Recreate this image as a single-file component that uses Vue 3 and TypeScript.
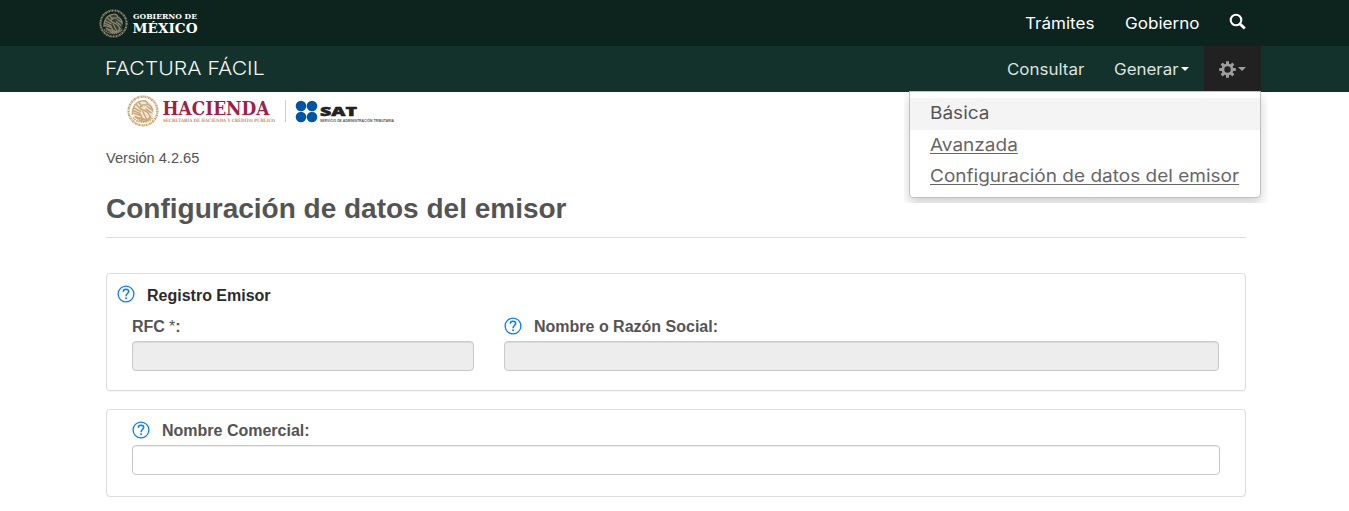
<script setup lang="ts">
interface MenuItem {
  label: string
  active: boolean
}

const menu: MenuItem[] = [
  { label: 'Básica', active: true },
  { label: 'Avanzada', active: false },
  { label: 'Configuración de datos del emisor', active: false },
]
</script>

<template>
  <svg class="defs" width="0" height="0" aria-hidden="true">
    <symbol id="seal" viewBox="0 0 60 60">
      <g fill="none" stroke="currentColor">
        <circle cx="30" cy="30" r="27" stroke-width="4.4" stroke-dasharray="3.2 1.1 1.6 .9" />
        <circle cx="30" cy="30" r="20" fill="currentColor" stroke="none" opacity=".3" />
        <path stroke-width="2.6" d="M10 37C10 22 17 12 29 11c8-1 11 4 8 7-3 2-7-1-10 2-4 4-1 7 3 8 6 2 12 6 13 14M13 24l13 7M11 29l14 6M12 34l13 4M17 18l11 10M22 14l7 8M29 30l8 16M24 34l6 13M35 26l11 8M37 21l10 7M39 17c6 3 9 8 9 14M16 41c7 4 13 1 17 5 4 3 8 1 11-3M22 46c5 4 12 4 17 1" />
        <path stroke-width="3" stroke-dasharray="3 1.3" d="M11 42c7 11 30 13 38-1M15 40c8 9 23 9 31-1" />
      </g>
    </symbol>
    <symbol id="help" viewBox="0 0 18 18">
      <g fill="none" stroke="#0d7bf2">
        <circle cx="9" cy="9" r="7.900" stroke-width="1.300" />
        <path d="M6.300 6.700C6.300 5.100 7.400 4.200 9 4.200s2.700.9 2.700 2.400c0 1.900-2.600 2-2.600 4.200v.5" stroke-width="1.500" />
      </g>
      <circle cx="9.100" cy="13.300" r=".95" fill="#0d7bf2" />
    </symbol>
  </svg>

  <header>
    <div class="gov-bar">
      <div class="container">
        <svg class="gov-logo" width="104" height="46" viewBox="0 0 104 46">
          <use class="gov-seal" href="#seal" x="0" y="9" width="29" height="29" />
          <text class="gov-small" x="34" y="19.400" textLength="64" lengthAdjust="spacingAndGlyphs">GOBIERNO DE</text>
          <text class="gov-large" x="33.500" y="33.300" textLength="65" lengthAdjust="spacingAndGlyphs">MÉXICO</text>
        </svg>
        <nav class="gov-nav">
          <a class="wide tramites">Trámites</a>
          <a class="wide gobierno">Gobierno</a>
          <svg class="search" width="18" height="18" viewBox="0 0 18 18">
            <circle cx="7" cy="7" r="5.300" fill="none" stroke="#fff" stroke-width="2.100" />
            <path d="M10.800 10.800l5 4.800" stroke="#fff" stroke-width="2.800" stroke-linecap="butt" />
          </svg>
        </nav>
      </div>
    </div>

    <div class="app-bar">
      <div class="container">
        <span class="wide brand">FACTURA FÁCIL</span>
        <nav class="app-nav">
          <a class="wide consultar">Consultar</a>
          <a class="wide generar">Generar</a>
          <i class="caret"></i>
          <div class="settings">
            <svg width="17" height="17" viewBox="-8.500 -8.500 17 17">
              <g fill="#9d9d9d">
                <rect v-for="n in 4" :key="n" x="-1.500" y="-8.300" width="3" height="16.600" rx=".4" :transform="`rotate(${n * 45})`" />
                <circle r="5.900" />
              </g>
              <circle r="3.200" fill="#212121" />
            </svg>
            <i class="caret muted"></i>
            <div class="menu-clip">
              <ul class="menu">
                <li v-for="item in menu" :key="item.label" :class="{ active: item.active }"><a class="wide">{{ item.label }}</a></li>
              </ul>
            </div>
          </div>
        </nav>
      </div>
    </div>
  </header>

  <main>
    <svg class="logos" width="275" height="46" viewBox="0 0 275 46">
      <use class="shcp-seal" href="#seal" x="0" y="3" width="32" height="32" />
      <text class="hacienda" x="35.500" y="22.600" textLength="107" lengthAdjust="spacingAndGlyphs">HACIENDA</text>
      <text class="secretaria" x="36" y="30.300" textLength="112" lengthAdjust="spacingAndGlyphs">SECRETARÍA DE HACIENDA Y CRÉDITO PÚBLICO</text>
      <path d="M158.500 8v22" stroke="#d9c9ae" />
      <g fill="#0055a5">
        <circle cx="174" cy="14" r="5.300" />
        <circle cx="185" cy="14" r="5.300" />
        <circle cx="174" cy="25" r="5.300" />
        <circle cx="185" cy="25" r="5.300" />
      </g>
      <text class="sat" x="193" y="24.300" textLength="37" lengthAdjust="spacingAndGlyphs">SAT</text>
      <text class="servicio" x="193" y="30.300" textLength="74" lengthAdjust="spacingAndGlyphs">SERVICIO DE ADMINISTRACIÓN TRIBUTARIA</text>
    </svg>
    <p class="version">Versión 4.2.65</p>
    <h1>Configuración de datos del emisor</h1>

    <section class="panel issuer">
      <div class="legend">
        <svg class="help"><use href="#help" /></svg>
        <strong>Registro Emisor</strong>
      </div>
      <div class="fields">
        <div class="field">
          <label>RFC <span class="star">*</span>:</label>
          <input disabled />
        </div>
        <div class="field">
          <label><svg class="help"><use href="#help" /></svg>Nombre o Razón Social:</label>
          <input disabled />
        </div>
      </div>
    </section>

    <section class="panel trade">
      <div class="field">
        <label><svg class="help"><use href="#help" /></svg>Nombre Comercial:</label>
        <input />
      </div>
    </section>
  </main>
</template>

<style>
html,
body {
  margin: 0;
  background: #fff;
  overflow: hidden;
}
</style>

<style scoped>
* {
  box-sizing: border-box;
}
.defs {
  position: absolute;
}
header {
  font-family: Inter, sans-serif;
}
.gov-bar {
  height: 46px;
  background: #0c231e;
}
.app-bar {
  height: 46px;
  background: #13322b;
}
.container {
  display: flex;
  justify-content: space-between;
  height: 46px;
  margin: 0 88px 0 99px;
}
.gov-seal {
  color: #8d846d;
}
.gov-small,
.gov-large {
  font-family: "DejaVu Serif", serif;
  font-weight: bold;
  fill: #fff;
}
.gov-small {
  font-size: 8px;
}
.gov-large {
  font-size: 13px;
}
.gov-nav {
  display: flex;
  align-items: center;
  color: #fff;
  font-size: 15.500px;
}
.wide {
  display: inline-block;
  transform: scaleX(1.1);
  transform-origin: left center;
}
.tramites {
  width: 100px;
}
.gobierno {
  width: 104px;
}
.search {
  margin: 0 14px 2px 0;
}
.brand {
  margin-left: 6px;
  color: #f0f3f2;
  font-size: 19.300px;
  font-weight: 300;
  line-height: 45px;
}
.app-nav {
  display: flex;
  align-items: center;
  color: #dde2e0;
  font-size: 15.400px;
}
.consultar {
  width: 107px;
}
.generar {
  width: 67px;
}
.caret {
  border: 4px solid transparent;
  border-top-color: #fff;
  border-bottom: 0;
}
.muted {
  margin-left: 2px;
  border-top-color: #9d9d9d;
}
.settings {
  position: relative;
  display: flex;
  align-items: center;
  width: 57px;
  height: 46px;
  margin-left: 15px;
  padding-left: 15px;
  background: #212121;
}
.menu-clip {
  position: absolute;
  top: 45px;
  right: -7px;
  width: 364px;
  height: 112px;
  padding: 0 7px 0 5px;
  overflow: hidden;
}
.menu {
  height: 107px;
  margin: 0;
  padding: 6px 0 0;
  list-style: none;
  background: #fff;
  border: 1px solid #bfc1c1;
  border-radius: 0 0 4px 4px;
  box-shadow: 0 6px 12px rgba(0, 0, 0, 0.18);
}
.menu li {
  height: 31px;
  padding-left: 20px;
  color: #666;
  font-size: 17.300px;
  line-height: 29px;
  white-space: nowrap;
}
.menu li a {
  text-decoration: underline;
  text-underline-offset: 2px;
}
.menu .active {
  height: 32px;
  background: #f4f4f4;
}
.menu .active a {
  color: #555;
  text-decoration: none;
}
main {
  margin: 0 103px 0 106px;
  font-family: "Liberation Sans", Arial, sans-serif;
  color: #545454;
}
.logos {
  display: block;
  margin-left: 21px;
}
.shcp-seal {
  color: #c7a671;
}
.hacienda {
  font: bold 18px "DejaVu Serif", "Liberation Serif", serif;
  fill: #a01f48;
}
.secretaria {
  font: bold 4.400px "DejaVu Serif", "Liberation Serif", serif;
  fill: #bd9558;
}
.sat {
  font: 900 13px "Open Sans", "Liberation Sans", sans-serif;
  fill: #222;
  stroke: #222;
  stroke-width: 0.500px;
}
.servicio {
  font: bold 3.800px "Liberation Sans", sans-serif;
  fill: #555;
}
.version {
  margin: 11px 0 0;
  font-size: 14.600px;
  line-height: 18px;
}
h1 {
  height: 71px;
  margin: 0 0 35px;
  padding-top: 25px;
  border-bottom: 1px solid #ddd;
  font-size: 28px;
  line-height: 34px;
}
.panel {
  border: 1px solid #ddd;
  border-radius: 4px;
  box-shadow: 0 1px 1px rgba(0, 0, 0, 0.05);
  font-size: 16px;
}
.issuer {
  height: 118px;
  margin-bottom: 18px;
  padding: 11px 26px 0 25px;
}
.legend {
  display: flex;
  height: 31px;
  margin-left: -15px;
  line-height: 22px;
  color: #2b2b2b;
}
.help {
  width: 18px;
  height: 18px;
  margin-right: 12px;
}
.issuer label .help {
  margin-top: 1px;
}
.fields {
  display: grid;
  grid-template-columns: 342px 1fr;
  gap: 30px;
}
label {
  display: flex;
  height: 25px;
  line-height: 22px;
  font-weight: bold;
}
.star {
  margin: 0 0 0 4px;
  font-size: 16px;
  font-weight: normal;
}
input {
  display: block;
  width: 100%;
  height: 30px;
  border: 1px solid #c8c9c9;
  border-radius: 4px;
  background: #fff;
  box-shadow: inset 0 1px 1px rgba(0, 0, 0, 0.075);
}
input:disabled {
  background: #ededed;
}
.trade {
  height: 88px;
  padding: 11px 25px 0;
}
.trade label {
  height: 24px;
  line-height: 20px;
}
</style>
